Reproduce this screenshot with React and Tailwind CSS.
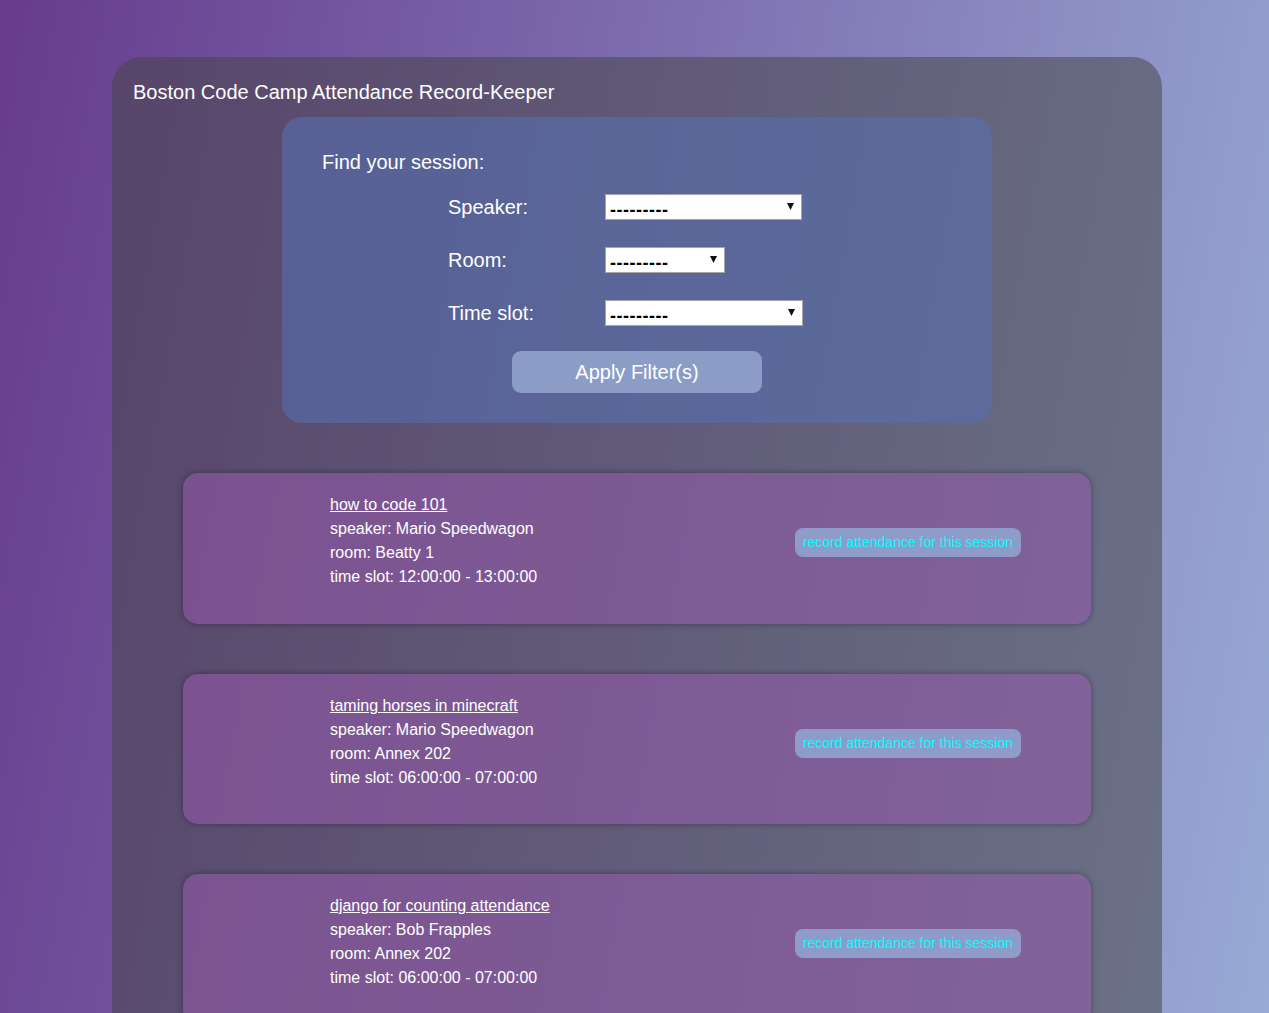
import React from "react";

const sessions = [
  { title: "how to code 101", speaker: "Mario Speedwagon", room: "Beatty 1", slot: "12:00:00 - 13:00:00" },
  { title: "taming horses in minecraft", speaker: "Mario Speedwagon", room: "Annex 202", slot: "06:00:00 - 07:00:00" },
  { title: "django for counting attendance", speaker: "Bob Frapples", room: "Annex 202", slot: "06:00:00 - 07:00:00" },
];

function FakeSelect({ width }) {
  return (
    <div
      className="flex h-[26px] items-center justify-between border border-[#a6a6a6] bg-white pl-[4px] pr-[7px]"
      style={{ width }}
    >
      <span className="pt-[6px] text-[18px] font-bold leading-none tracking-[0.5px] text-black">---------</span>
      <svg width="7" height="8" viewBox="0 0 7 8" className="mb-[2px]">
        <polygon points="0,1 7,1 3.5,8" fill="#111" />
      </svg>
    </div>
  );
}

function Row({ label, width }) {
  return (
    <div className="flex h-[26px] items-center">
      <div className="w-[157px] text-[20px] leading-none text-white">{label}</div>
      <FakeSelect width={width} />
    </div>
  );
}

export default function App() {
  return (
    <div
      className="min-h-screen bg-fixed bg-[linear-gradient(100deg,#673b8d_0%,#98aad6_100%)] pt-[57px] pl-[112px]"
      style={{ fontFamily: '"Liberation Sans", Arial, sans-serif' }}
    >
      <div className="w-[1050px] rounded-t-[30px] bg-[rgba(70,70,70,0.53)] pt-[24px] pb-[60px]">
        <h1 className="pl-[21px] text-[20px] leading-[23px] text-white">
          Boston Code Camp Attendance Record-Keeper
        </h1>

        <div className="mx-auto mt-[13px] w-[710px] rounded-[20px] bg-[rgba(87,110,175,0.6)] pt-[34px] pb-[30px]">
          <div className="pl-[40px] text-[20px] leading-[23px] text-white">Find your session:</div>
          <div className="mt-[20px] flex flex-col gap-[27px] pl-[166px]">
            <Row label="Speaker:" width={197} />
            <Row label="Room:" width={120} />
            <Row label="Time slot:" width={198} />
          </div>
          <div className="mt-[25px] flex justify-center">
            <button className="h-[42px] w-[250px] rounded-[9px] bg-[#8b9dc7] text-[20px] text-white">
              Apply Filter(s)
            </button>
          </div>
        </div>

        <div className="mt-[50px] flex flex-col items-center gap-[50px]">
          {sessions.map((s) => (
            <div
              key={s.title}
              className="flex h-[150.5px] w-[908px] items-start justify-between rounded-[15px] bg-[rgba(150,90,172,0.55)] pt-[20px] pl-[147px] pr-[70px] shadow-[0_0_6px_rgba(0,0,0,0.35)]"
            >
              <div className="text-[16px] leading-[24px] text-white">
                <a href="#" className="underline">{s.title}</a>
                <div>speaker: {s.speaker}</div>
                <div>room: {s.room}</div>
                <div>time slot: {s.slot}</div>
              </div>
              <button className="mt-[35px] h-[29px] rounded-[8px] bg-[#8f9bc8] px-[8px] text-[14px] text-[#00ffff]">
                record attendance for this session
              </button>
            </div>
          ))}
        </div>
      </div>
    </div>
  );
}
